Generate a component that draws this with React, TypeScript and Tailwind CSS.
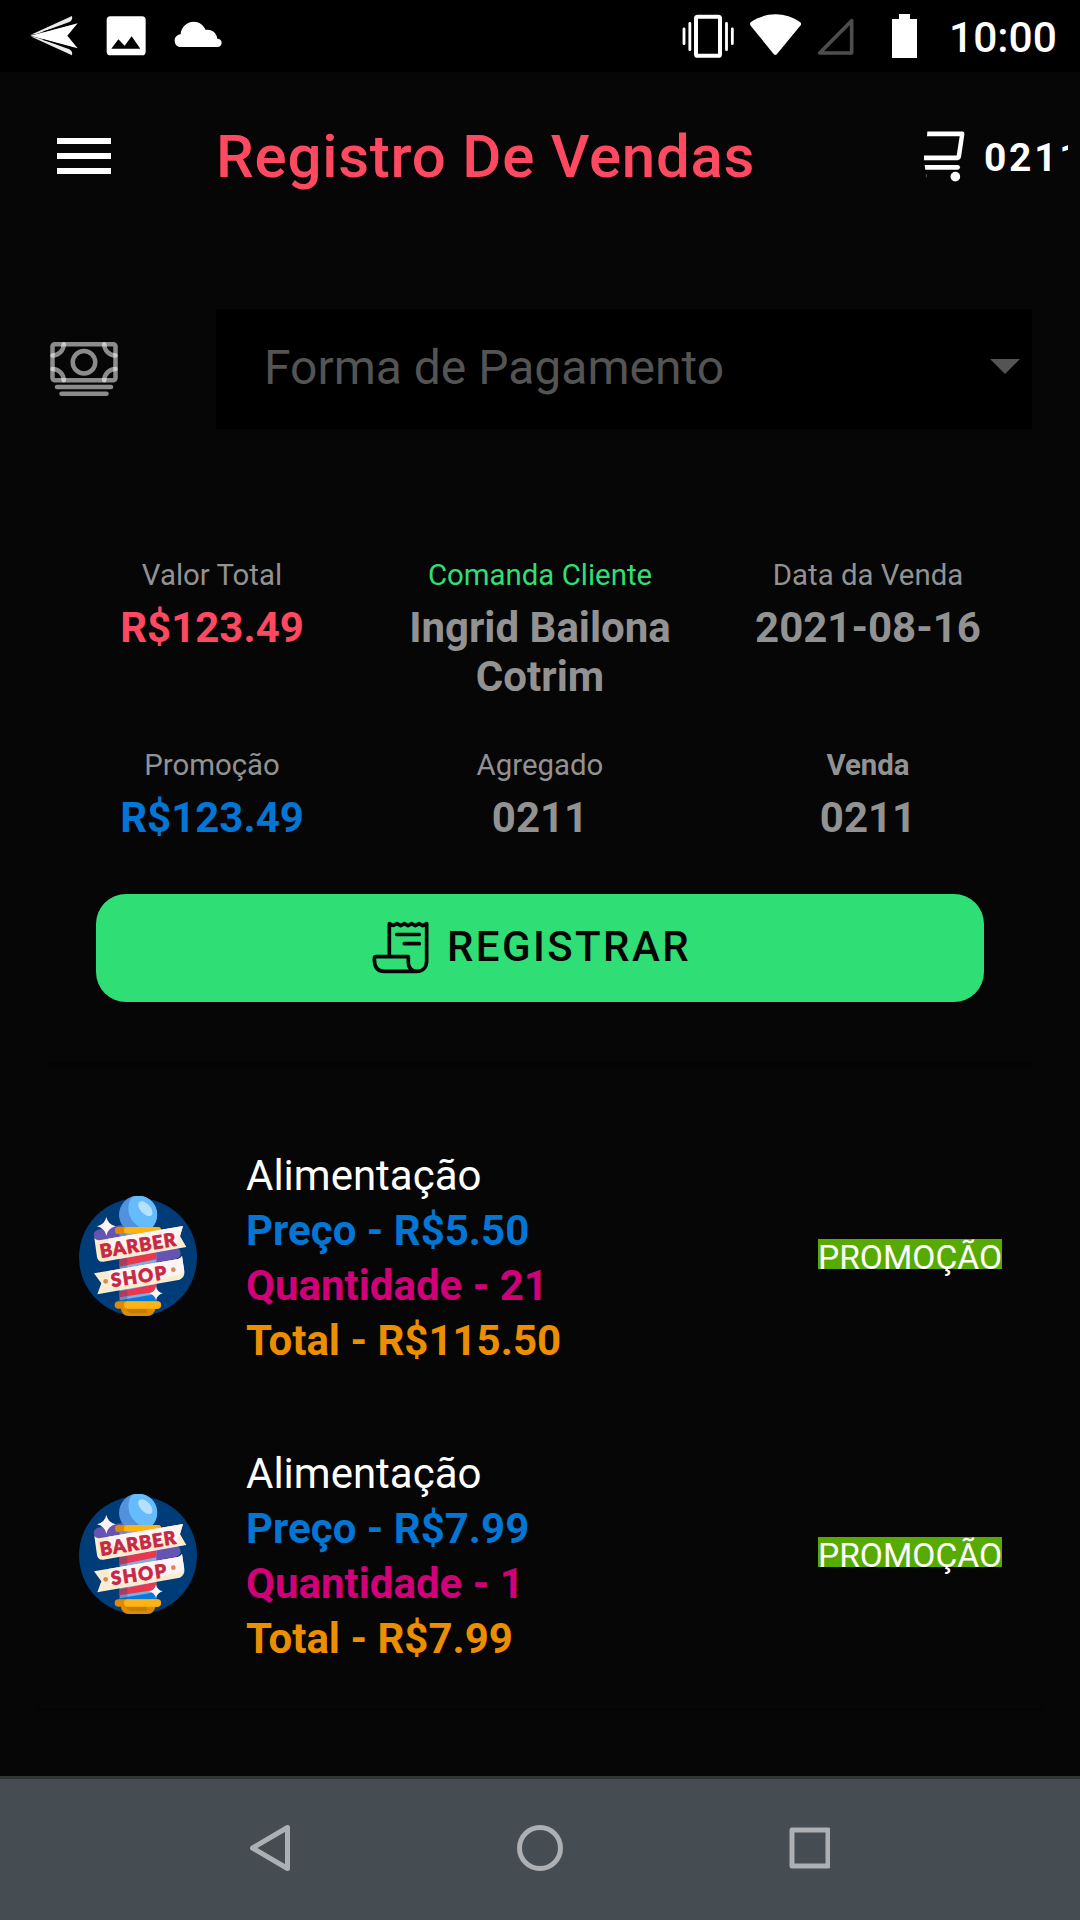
import React from "react";

const StatusBar = () => (
  <div className="flex h-[72px] items-start bg-black">
    <svg className="ml-[30px] mt-[15px]" width="49" height="42" viewBox="90 45 147 126">
      <g fill="#fff">
        <path d="M91 105 L216 48 Q219 60 208 66 L112 101 Z" opacity=".92" />
        <path d="M91 107 L233 70 L202 107 L233 145 Z" />
        <path d="M91 109 L216 166 Q219 154 208 148 L112 113 Z" opacity=".92" />
      </g>
      <path d="M130 95 L230 67 M130 119 L230 148" stroke="#000" strokeWidth="2.500" />
    </svg>
    <svg className="ml-[27px] mt-4" width="40" height="40" viewBox="318 48 120 120">
      <path fillRule="evenodd" fill="#fff" d="M331 49H426Q437 49 437 60V155Q437 166 426 166H331Q320 166 320 155V60Q320 49 331 49ZM334 146H421L395 109L374 137L355 118Z" />
    </svg>
    <svg className="ml-[28px] mt-5" width="48" height="28" viewBox="522 60 144 84">
      <path fill="#fff" d="M542 141C531 141 524 132 524 122C524 111 532 104 542 103C543 82 560 65 581 65C597 65 611 75 617 90C635 86 650 99 652 116C660 116 665 122 665 128C665 136 659 141 652 141Z" />
    </svg>
    <svg className="ml-[460px] mt-[14px]" width="54" height="45" viewBox="126 42 162 135">
      <rect x="168" y="50.500" width="72" height="117" rx="5" fill="none" stroke="#fff" strokeWidth="12" />
      <path d="M132 87V131M149.500 70V149M259.500 70V149M277 87V131" stroke="#fff" strokeWidth="8.500" strokeLinecap="round" />
    </svg>
    <svg className="ml-[13px] mt-[14px]" width="54" height="42" viewBox="327 42 162 126">
      <path d="M332 67C376 35 437 35 481 67Q485 71 482 76L411 162Q406 168 401 162L332 77Q328 71 332 67Z" fill="#fff" />
    </svg>
    <svg className="ml-[13px] mt-[18px]" width="38" height="38" viewBox="528 54 114 114">
      <path d="M635 62V159H539Z" fill="none" stroke="#4d4d4d" strokeWidth="11" strokeLinejoin="round" />
    </svg>
    <svg className="ml-[38px] mt-[14px]" width="25" height="44" viewBox="756 42 75 132">
      <path d="M777 42H810V57H831V174H756V57H777Z" fill="#fff" />
    </svg>
    <span className="ml-8 mt-[13px] text-[42.500px] font-medium leading-[49px] text-white">10:00</span>
  </div>
);

const CartIcon = () => (
  <svg className="shrink-0" width="42" height="53" viewBox="132 87 126 159">
    <path d="M142 91.500H247Q254 92 253 101L243 169Q241 177 234 178H132V163.500H230L239 106H141Z" fill="#fff" />
    <path d="M134 192H234Q240 193 240 199Q240 205 234 206H136Z" fill="#fff" />
    <circle cx="226" cy="227" r="14.500" fill="#fff" />
    <path d="M139 219V229" stroke="#777" strokeWidth="2" />
  </svg>
);

const Header = () => (
  <header className="flex h-[168px] items-center pl-[57px]">
    <div className="flex w-[54px] flex-col gap-[9px]">
      <div className="h-[6px] bg-white" />
      <div className="h-[6px] bg-white" />
      <div className="h-[6px] bg-white" />
    </div>
    <h1 className="ml-[105px] mt-[2px] w-[708px] whitespace-nowrap text-[60px] font-medium tracking-[0.75px] text-[#ff4961]">Registro De Vendas</h1>
    <div className="flex w-36 items-center overflow-hidden">
      <CartIcon />
      <span className="ml-[18px] mt-[5px] text-[39px] font-bold tracking-[2.700px] text-white">0211</span>
    </div>
  </header>
);

const CashIcon = () => (
  <svg width="72" height="72" viewBox="0 0 512 512" fill="none" stroke="rgba(255,255,255,0.54)" strokeWidth="32" strokeLinecap="round" strokeLinejoin="round">
    <rect x="32" y="80" width="448" height="256" rx="16" />
    <path d="M64 384H448" />
    <path d="M96 432H416" />
    <circle cx="256" cy="208" r="80" />
    <path d="M480 160a80 80 0 0 1-80-80" />
    <path d="M32 160a80 80 0 0 0 80-80" />
    <path d="M480 256a80 80 0 0 0-80 80" />
    <path d="M32 256a80 80 0 0 1 80 80" />
  </svg>
);

const PaymentSelect = () => (
  <div className="mt-[69px] flex h-[120px] items-center pl-12">
    <CashIcon />
    <div className="ml-24 flex h-[120px] w-[816px] items-center justify-between bg-black pl-12 pr-3">
      <span className="-mt-[3px] text-[48px] text-[#545454]">Forma de Pagamento</span>
      <svg className="-mt-[5px]" width="30" height="15" viewBox="0 0 30 15">
        <path d="M0 0H30L15 15Z" fill="#545454" />
      </svg>
    </div>
  </div>
);

type StatProps = { label: string; value: string; labelClass?: string; valueClass?: string };

const Stat = ({ label, value, labelClass = "text-[#929292]", valueClass = "text-[#929292]" }: StatProps) => (
  <div className="flex flex-col items-center text-center">
    <span className={`text-[29.400px] leading-[34px] ${labelClass}`}>{label}</span>
    <span className={`mt-[11px] w-[290px] text-[42px] font-bold leading-[49px] ${valueClass}`}>{value}</span>
  </div>
);

const ReceiptIcon = () => (
  <svg className="-mt-[2px]" width="58" height="55" viewBox="96 120 174 165" fill="none" stroke="#060606" strokeWidth="11" strokeLinecap="round" strokeLinejoin="round">
    <path d="M148 228V131L160 136L171 131L182 137L193 131L204 137L215 131L226 137L237 131L248 137L260 131V242C260 262 248 274 231 274C214 274 205 262 205 249V230H108Q103 230 103 237C103 260 110 274 132 274H232" />
    <path d="M170 163.500H238M193 191H238" />
  </svg>
);

const BarberLogo = () => (
  <svg className="-mt-[2px] shrink-0" width="120" height="120" viewBox="54 78 360 360">
    <circle cx="234" cy="262" r="177" fill="#003c78" />
    <path d="M101 193Q103 179 125 177L180 166H234V212H118Q101 210 101 193Z" fill="#6554b2" />
    <path d="M280 245L352 235Q362 240 362 253Q360 264 345 267L285 278Z" fill="#6554b2" />
    <circle cx="234" cy="134" r="57" fill="#5292dc" />
    <path d="M234 77A57 57 0 0 1 262 184Q205 160 205 115Q206 92 217 80Z" fill="#64bcfb" />
    <ellipse cx="256" cy="116" rx="15" ry="27" transform="rotate(-43 256 116)" fill="#b7dfff" />
    <rect x="165" y="171" width="138" height="21" rx="10" fill="#dd8a00" />
    <rect x="192" y="171" width="111" height="21" rx="10" fill="#ffb313" />
    <rect x="179" y="190" width="110" height="210" fill="#83abe3" />
    <path d="M179 268L289 246V268L179 290Z" fill="#e63950" />
    <path d="M179 364L289 342V365L179 382Z" fill="#e63950" />
    <path d="M179 391L289 372V400H179Z" fill="#087ad5" />
    <path d="M179 190H202V400H179Z" fill="#17447e" opacity=".27" />
    <path d="M103 204Q108 212 122 210L369 168L360 198L379 231L130 275Q114 277 111 261Z" fill="#faedcf" />
    <path d="M145 206L369 168L360 198L350 220L149 235Z" fill="#fff4f4" />
    <path d="M102 310L354 267Q363 264 366 258L373 303Q375 322 359 329L112 373L124 340Z" fill="#faedcf" />
    <path d="M146 303L354 267Q363 264 366 258L372 300Q369 311 355 315L150 350Z" fill="#fff4f4" />
    <g fontFamily="Lato, sans-serif" fontWeight="900" fontSize="55" fill="#c72844" stroke="#c72844" strokeWidth="2.500" strokeLinejoin="round">
      <text x="123" y="263" textLength="229" transform="rotate(-9 123 263)">BARBER</text>
      <text x="156" y="351" textLength="167" transform="rotate(-8.500 156 351)">SHOP</text>
    </g>
    <circle cx="137" cy="334" r="7" fill="#df8459" />
    <circle cx="340" cy="299" r="7" fill="#df8459" />
    <path d="M139 141Q144 164 167 169Q144 174 139 197Q134 174 111 169Q134 164 139 141Z" fill="#fff4f4" />
    <path d="M288 350Q292 366 308 370Q292 374 288 391Q284 374 268 370Q284 366 288 350Z" fill="#fff4f4" />
    <path d="M181 410H288Q283 437 262 438H206Q185 437 181 410Z" fill="#dc8c03" />
    <path d="M198 414H260V429H211Q201 426 198 414Z" fill="#c47d04" />
    <rect x="164" y="394" width="139" height="22" rx="11" fill="#dd8a00" />
    <rect x="192" y="394" width="111" height="22" rx="11" fill="#ffb313" />
  </svg>
);

type ItemProps = { price: string; quantity: number; total: string };

const SaleItem = ({ price, quantity, total }: ItemProps) => (
  <div className="flex h-[298px] items-center pl-[78px] pr-[78px]">
    <BarberLogo />
    <div className="ml-12 mt-[2px] flex grow flex-col text-[42px] font-bold leading-[55px]">
      <span className="font-normal text-white">Alimentação</span>
      <span className="text-[#0475d2]">Preço - {price}</span>
      <span className="text-[#cf0078]">Quantidade - {quantity}</span>
      <span className="text-[#eb8e00]">Total - {total}</span>
    </div>
    <div className="-mt-[6px] h-[30px] w-[184px] whitespace-nowrap bg-[#57ab00] text-[33.600px] leading-[37px] text-white">PROMOÇÃO</div>
  </div>
);

const NavBar = () => (
  <nav className="flex h-36 justify-center border-t-[3px] border-[#2f3435] bg-[#454d53]">
    <svg className="mt-[46px]" width="580" height="48" viewBox="250 1825 580 48" fill="none" stroke="#adb0b2" strokeWidth="5" strokeLinejoin="round">
      <path d="M287.500 1827.500V1868.500L252.500 1848Z" />
      <circle cx="540" cy="1848" r="20.500" />
      <rect x="792" y="1830" width="36" height="36" />
    </svg>
  </nav>
);

export default function App() {
  return (
    <div className="flex h-[1920px] w-[1080px] flex-col overflow-hidden bg-[#060606] font-['Roboto',sans-serif]">
      <StatusBar />
      <Header />
      <main className="flex grow flex-col">
        <PaymentSelect />
        <section className="mx-12 mt-[129px] grid grid-cols-3 grid-rows-[190px_146px]">
          <Stat label="Valor Total" value="R$123.49" valueClass="text-[#ff4961]" />
          <Stat label="Comanda Cliente" value="Ingrid Bailona Cotrim" labelClass="text-[#2fdf75]" />
          <Stat label="Data da Venda" value="2021-08-16" />
          <Stat label="Promoção" value="R$123.49" valueClass="text-[#0475d2]" />
          <Stat label="Agregado" value="0211" />
          <Stat label="Venda" value="0211" labelClass="font-bold text-[#929292]" />
        </section>
        <button className="mx-24 flex h-[108px] items-center rounded-[30px] bg-[#2fdf75] pl-[276px] text-[#060606]">
          <ReceiptIcon />
          <span className="ml-[17px] -mt-1 text-[42px] font-medium tracking-[2.400px]">REGISTRAR</span>
        </button>
        <div className="mx-12 mt-[60px] h-[3px] bg-[#040404]" />
        <section className="mt-[43px]">
          <SaleItem price="R$5.50" quantity={21} total="R$115.50" />
          <SaleItem price="R$7.99" quantity={1} total="R$7.99" />
        </section>
        <div className="mx-9 mt-1 h-[3px] bg-[#040404]" />
      </main>
      <NavBar />
    </div>
  );
}
